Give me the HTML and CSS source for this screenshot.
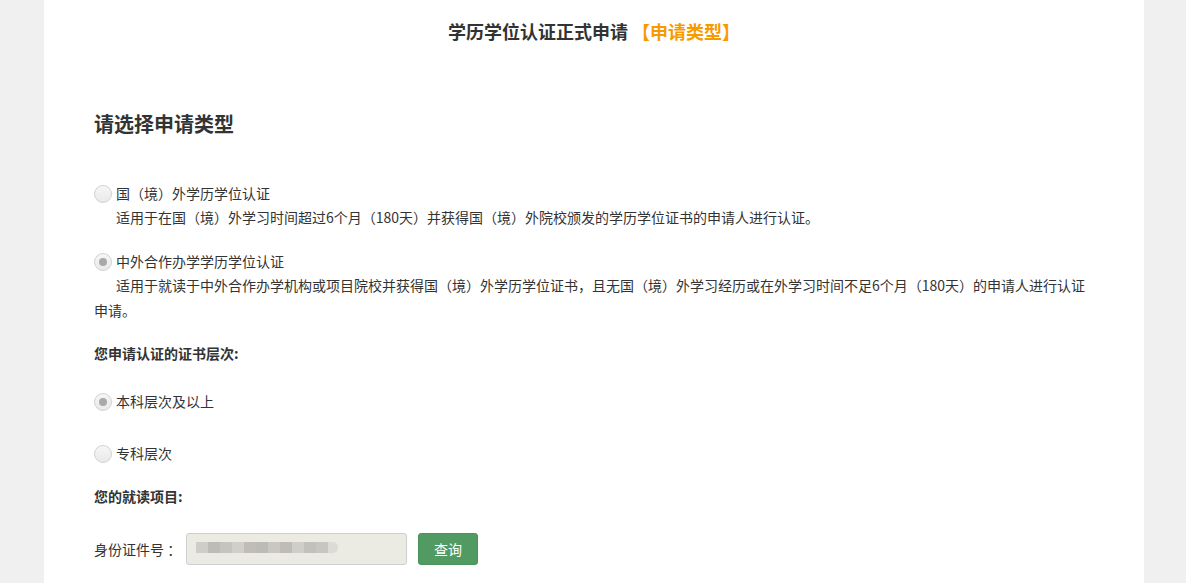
FILE: index.html
```html
<!DOCTYPE html>
<html lang="zh-CN">

<head>
    <meta charset="UTF-8">
    <meta name="viewport" content="width=device-width, initial-scale=1.0">
    <title>学历学位认证正式申请</title>
    <link rel="stylesheet" href="styles.css">
</head>

<body>
    <div class="page">
        <h1 class="page-title">学历学位认证正式申请 <span class="step">【申请类型】</span></h1>

        <div class="form">
            <h2 class="form-heading">请选择申请类型</h2>

            <div class="option option-first">
                <label class="radio-row">
                    <input type="radio" name="type" value="abroad">
                    <span>国（境）外学历学位认证</span>
                </label>
                <p class="option-desc">适用于在国（境）外学习时间超过6个月（180天）并获得国（境）外院校颁发的学历学位证书的申请人进行认证。</p>
            </div>

            <div class="option option-second">
                <label class="radio-row">
                    <input type="radio" name="type" value="joint" checked>
                    <span>中外合作办学学历学位认证</span>
                </label>
                <p class="option-desc">适用于就读于中外合作办学机构或项目院校并获得国（境）外学历学位证书，且无国（境）外学习经历或在外学习时间不足6个月（180天）的申请人进行认证申请。</p>
            </div>

            <div class="field-label level-label">您申请认证的证书层次:</div>

            <label class="radio-row level-first">
                <input type="radio" name="level" value="bachelor" checked>
                <span>本科层次及以上</span>
            </label>

            <label class="radio-row level-second">
                <input type="radio" name="level" value="college">
                <span>专科层次</span>
            </label>

            <div class="field-label project-label">您的就读项目:</div>

            <div class="id-row">
                <span class="id-label">身份证件号 ：</span>
                <div class="id-input">
                    <span class="mask" style="background:#cfcdc8"></span>
                    <span class="mask" style="background:#bdbcb6"></span>
                    <span class="mask" style="background:#c6c4bf"></span>
                    <span class="mask" style="background:#d1cfca"></span>
                    <span class="mask" style="background:#c0bcb6"></span>
                    <span class="mask" style="background:#bdbbb6"></span>
                    <span class="mask" style="background:#c9c7c2"></span>
                    <span class="mask" style="background:#bfbcb7"></span>
                    <span class="mask" style="background:#d0cec9"></span>
                    <span class="mask" style="background:#c3c1bc"></span>
                    <span class="mask" style="background:#c8c6c1"></span>
                    <span class="mask mask-end" style="background:#dcdbd5"></span>
                </div>
                <button class="btn-query" type="button">查询</button>
            </div>
        </div>
    </div>
</body>

</html>
```

FILE: styles.css
```css
html,
body {
    margin: 0;
    padding: 0;
    height: 100%;
    background-color: #f0f0f0;
    font-family: "Microsoft YaHei", "Noto Sans CJK SC", "Noto Sans", sans-serif;
    color: #333;
    font-size: 14px;
}

.page {
    width: 1100px;
    min-height: 100%;
    margin: 0 0 0 44px;
    background: #fff;
    box-sizing: border-box;
}

.page-title {
    margin: 0;
    padding-top: 19px;
    font-size: 18px;
    line-height: 24px;
    font-weight: bold;
    text-align: center;
}

.step {
    color: #f79a00;
}

.form {
    padding: 0 50px;
}

.form-heading {
    margin: 67px 0 0;
    font-size: 20px;
    line-height: 28px;
    font-weight: bold;
}

.radio-row {
    display: flex;
    align-items: center;
    gap: 4px;
    height: 24px;
    line-height: 24px;
    cursor: pointer;
}

.radio-row input {
    appearance: none;
    -webkit-appearance: none;
    margin: 0;
    width: 18px;
    height: 18px;
    border-radius: 50%;
    border: 1px solid #d2d2d2;
    background: linear-gradient(#f6f6f6, #e9e9e9);
    box-sizing: border-box;
    display: grid;
    place-items: center;
    position: relative;
    top: 1px;
}

.radio-row input:checked::after {
    content: "";
    width: 8px;
    height: 8px;
    border-radius: 50%;
    background: #a9a9a9;
}

.option-first {
    margin-top: 43px;
}

.option-second {
    margin-top: 19px;
}

.option-desc {
    margin: 0;
    text-indent: 22px;
    line-height: 25px;
}

.field-label {
    font-weight: bold;
    line-height: 24px;
}

.level-label {
    margin-top: 18px;
}

.level-first {
    margin-top: 24px;
}

.level-second {
    margin-top: 28px;
}

.project-label {
    margin-top: 19px;
}

.id-row {
    display: flex;
    align-items: center;
    margin-top: 25px;
}

.id-label {
    width: 92px;
}

.id-input {
    width: 221px;
    height: 32px;
    box-sizing: border-box;
    border: 1px solid #cfcfcf;
    border-radius: 3px;
    background: #ebebe4;
    display: flex;
    align-items: center;
    padding-left: 9px;
    padding-bottom: 3px;
}

.mask {
    width: 12px;
    height: 11px;
    filter: blur(0.6px);
}

.mask-end {
    width: 10px;
    border-radius: 0 5px 5px 0;
}

.btn-query {
    margin-left: 11px;
    width: 60px;
    height: 32px;
    border: 1px solid #4a935a;
    border-radius: 3px;
    background: #519a61;
    color: #fff;
    font-family: inherit;
    font-size: 14px;
    padding: 0;
    cursor: pointer;
}
```
